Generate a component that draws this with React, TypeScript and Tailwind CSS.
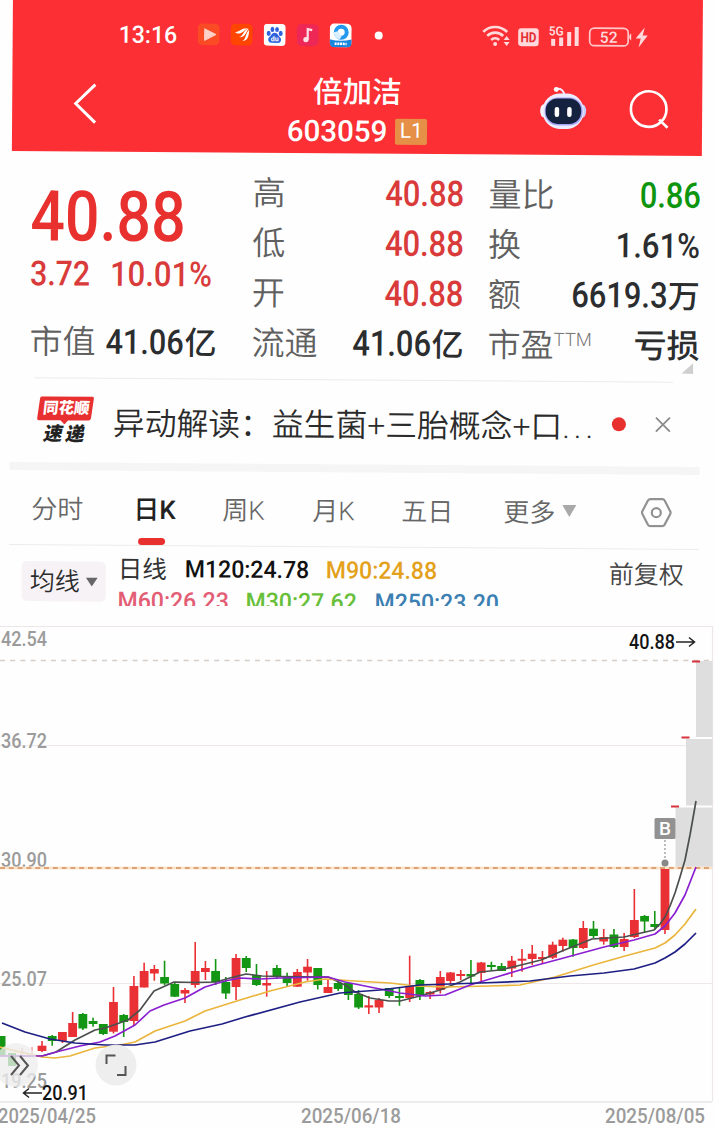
import React from 'react';
import clsx from 'clsx';

type Candle = [up: 0 | 1, high: number, top: number, bottom: number, low: number];

const FIRST_X = 42;
const STEP = 10.213;

const CANDLES: Candle[] = [
  [1, 1041, 1045.7, 1051, 1052],
  [0, 1035, 1036, 1041, 1045.7],
  [1, 1032, 1032, 1041, 1043],
  [1, 1012, 1023, 1037, 1037],
  [0, 1013, 1014, 1028.5, 1030],
  [0, 1017.7, 1021, 1024, 1026.7],
  [0, 1024, 1024, 1034, 1035],
  [1, 987, 1002, 1031.7, 1033.5],
  [0, 1014, 1015, 1022, 1037],
  [1, 976, 986, 1021, 1025],
  [1, 962.7, 971, 987.5, 987.5],
  [1, 965, 969, 973.5, 980.7],
  [0, 960.7, 977, 983.5, 985],
  [0, 983, 984, 996.7, 997],
  [1, 988, 990, 993.5, 1003],
  [1, 942, 971, 985, 987.7],
  [1, 961, 968, 972, 980],
  [0, 959, 971, 982, 985],
  [0, 977, 982, 993.5, 999],
  [1, 954, 958, 987, 1000],
  [0, 956, 958, 968, 972],
  [0, 964, 975, 985, 986],
  [1, 971, 983, 985.5, 996.7],
  [0, 965, 968, 977, 979],
  [0, 972.7, 977, 983, 987],
  [1, 969, 972, 986.7, 987],
  [1, 959, 966.7, 972.5, 980.7],
  [0, 968, 968, 985, 989.5],
  [1, 979, 987, 993, 993],
  [0, 980, 983, 989, 991],
  [0, 982, 983, 995, 1000],
  [0, 990, 994, 1007.5, 1009],
  [1, 996, 1005.3, 1007.5, 1014],
  [1, 998, 1000, 1007.5, 1013],
  [0, 988, 988, 996, 998],
  [0, 988, 996, 998, 1005.7],
  [1, 955.7, 986, 998, 1002],
  [0, 979, 980, 995.5, 1000],
  [1, 991, 992, 994.5, 999],
  [1, 971, 977, 990, 993.5],
  [1, 972, 972.5, 981, 984],
  [1, 970, 974, 976, 980],
  [0, 960, 974, 976.5, 985],
  [1, 962, 962.5, 973, 983],
  [0, 961.7, 965, 967, 970.7],
  [0, 963, 966, 971, 971],
  [1, 956, 960.7, 968.5, 977],
  [1, 949, 958.7, 960.7, 971.7],
  [1, 945, 953.7, 959, 965],
  [1, 951, 957, 959, 964],
  [1, 941.7, 944.7, 957.7, 959],
  [1, 937.7, 939.7, 946, 951.7],
  [0, 939, 939.5, 948, 956.7],
  [1, 921, 928, 948, 949],
  [0, 921, 928.7, 936, 938],
  [1, 929, 937, 941.5, 944.7],
  [0, 929, 934.5, 947, 948],
  [1, 933, 939, 947, 951],
  [1, 889, 920, 937, 938],
  [0, 915, 916, 921.5, 932.7],
  [0, 911, 924, 927, 930],
  [1, 869, 869, 930, 934],
];

const AVERAGES = [
  {
    color: '#4b4f4d',
    points:
      '0,1056 42,1056 56,1052 75,1040 95,1030 105,1028 128,1020 140,1010 154,991 174,982 195,982.5 216,982 230,978 246,974 262,976 280,976.5 328,977 345,985 355,992 370,998 389,1001 400,1001 420,996 440,990 460,982 480,972 500,970 521,965 541,960 562,951 592,939 624,937 654,930 660,924 665,917 670,906 675,893 680,877 685,860 690,835 696,801',
  },
  {
    color: '#e9b53c',
    points:
      '0,1047 20,1052 42,1057 55,1058 70,1056 95,1048 120,1045 135,1042 155,1031 185,1021 205,1011 240,1000 270,991 305,982 325,979 355,981 390,983 415,986 445,987 490,986 520,985 555,977 590,966 625,956 655,948 665,943 675,935 685,924 696,909',
  },
  {
    color: '#8a1fd0',
    points:
      '0,1056 42,1056 60,1051 80,1046 100,1042 115,1036 135,1025 150,1011 164,1005 185,998 205,987 225,981 240,978 260,979 280,978 328,977 345,982 375,988 400,993 425,996 445,995 470,985 500,976 530,967 560,959 604,947 634,940 655,934 665,926 675,913 685,895 696,867',
  },
  {
    color: '#1e1f83',
    points:
      '2,1023 25,1032 50,1039 75,1043 105,1045 135,1045 155,1042 190,1031 222,1024 245,1017 300,1002 340,993 380,990 420,985 480,983 530,981 570,976 604,973 634,969 655,963 665,958 675,952 685,944 696,933',
  },
];

const AXIS = [
  { text: '42.54', y: 646 },
  { text: '36.72', y: 748 },
  { text: '30.90', y: 867 },
  { text: '25.07', y: 986 },
  { text: '19.25', y: 1088 },
];

const TABS = [
  { label: '周K', width: 'w-[90px]' },
  { label: '月K', width: 'w-[89px]' },
  { label: '五日', width: 'w-[102px]' },
];

const Num: React.FC<{ className?: string; children: React.ReactNode }> = ({ className, children }) => (
  <span className={clsx('inline-block whitespace-nowrap font-medium', className)}>{children}</span>
);

const AppIcons = () => (
  <div className="ml-[18px] flex items-center gap-[11px]">
    <svg width="22" height="22" viewBox="0 0 22 22">
      <rect width="22" height="22" rx="5" fill="#fb4b25" />
      <path d="M7 5.500v11.500L18 11z" fill="#ffd2c8" stroke="#ffd2c8" strokeLinejoin="round" />
    </svg>
    <svg width="22" height="22" viewBox="0 0 22 22">
      <rect width="22" height="22" rx="5" fill="#ff4500" />
      <path d="M4 8.500C8 9 10 4 17.500 4.500 13 6 10 13 4 8.500zM8 13.500c5-.5 4-7.500 10-8.500-3 3-3 9.500-10 8.500zM11.500 17.500c4-1.500 3-8 7-11.500-.5 4 0 11-7 11.500z" fill="#fff" />
    </svg>
    <svg width="22" height="22" viewBox="0 0 22 22">
      <rect width="22" height="22" rx="4" fill="#fff" />
      <g fill="#2f62dc">
        <ellipse cx="5" cy="9.500" rx="2" ry="2.600" />
        <ellipse cx="8.700" cy="5.600" rx="1.900" ry="2.600" />
        <ellipse cx="13.300" cy="5.600" rx="1.900" ry="2.600" />
        <ellipse cx="17" cy="9.500" rx="2" ry="2.600" />
        <path d="M11 9c3 0 3.500 3 5.500 4.500 2 2 .5 5.500-2 5.500h-7c-2.500 0-4-3.500-2-5.500C7.500 12 8 9 11 9z" />
      </g>
      <text x="11" y="17.300" fontSize="7" fontWeight="700" textAnchor="middle" fill="#fff">du</text>
    </svg>
    <svg width="22" height="22" viewBox="0 0 22 22">
      <rect width="22" height="22" rx="5" fill="#ee2856" />
      <path d="M11 15.500V5l4.500 1" fill="none" stroke="#ffe0e6" strokeWidth="2.200" />
      <circle cx="9.300" cy="15.500" r="2.700" fill="#ffe0e6" />
    </svg>
    <svg width="22" height="24" viewBox="0 0 22 24">
      <rect width="22" height="24" rx="5" fill="#fff" />
      <circle cx="11.500" cy="9" r="5.500" fill="none" stroke="#2299ee" strokeWidth="4" />
      <path d="M4 9a7 7 0 0 0 6 7l2-3-4-5z" fill="#d9efff" />
      <path d="M0 16q11 3 22 0v3q0 5-5 5H5q-5 0-5-5z" fill="#1687dd" />
      <path d="M5 20.500h12" stroke="#fff" strokeWidth="2.500" strokeDasharray="2 .7" />
    </svg>
  </div>
);

const StatusIcons = () => (
  <svg className="-mt-0.5 ml-[99px]" width="170" height="24" viewBox="0 0 170 24">
    <g fill="none" stroke="#ffd9db" strokeWidth="2.700">
      <path d="M1.500 8.500a17 17 0 0 1 24 0" />
      <path d="M5.500 12.500a11.500 11.500 0 0 1 16 0" />
      <path d="M9.500 16.500a6 6 0 0 1 8 0" />
    </g>
    <g fill="#ffd9db">
      <circle cx="13.500" cy="20.500" r="2" />
      <path d="M22 16.500l3-4 3 4zM22 18.500l3 4 3-4z" />
      <rect x="36.500" y="4.500" width="20.500" height="18" rx="3" />
      <text x="46.800" y="18.500" fontSize="14" fontWeight="700" textAnchor="middle" fill="#e22f35" textLength="16" lengthAdjust="spacingAndGlyphs">HD</text>
      <text x="67" y="11.500" fontSize="12.500" fontWeight="600" textLength="15" lengthAdjust="spacingAndGlyphs">5G</text>
      <rect x="69.500" y="15" width="4" height="7" />
      <rect x="77.500" y="13.500" width="4" height="8.500" />
      <rect x="85.500" y="8" width="4" height="14" />
      <rect x="93" y="3" width="4" height="19" />
      <text x="127" y="18.500" fontSize="15.500" fontWeight="500" textAnchor="middle">52</text>
      <path d="M149.500 9v7q-2-1-2-3.500t2-3.500zM163 3l-9 11h5l-2 9 9-12h-5z" />
    </g>
    <rect x="108" y="4" width="38.500" height="17.500" rx="4.500" fill="none" stroke="#ffc7ca" strokeWidth="1.700" />
  </svg>
);

const Robot = () => (
  <svg width="48" height="44" viewBox="0 0 48 44">
    <path d="M17 3q7-1 8 6" fill="none" stroke="#f4eaff" strokeWidth="2" />
    <circle cx="17" cy="3.500" r="2.500" fill="#fff" />
    <ellipse cx="4.500" cy="25" rx="3.500" ry="6.500" fill="#f6f5ff" />
    <ellipse cx="43.500" cy="25" rx="3.500" ry="6.500" fill="#c9cdfb" />
    <rect x="3.500" y="7.500" width="41" height="35.500" rx="17" fill="#eeecff" />
    <rect x="5.500" y="11.500" width="38" height="28" rx="13" fill="#a7a5f6" />
    <rect x="6.500" y="12.500" width="35.500" height="25.500" rx="12" fill="#15223f" />
    <rect x="15.500" y="21" width="4.500" height="10" rx="2.200" fill="#fff" />
    <rect x="28" y="21" width="4.500" height="10" rx="2.200" fill="#fff" />
  </svg>
);

const Header = () => (
  <header className="h-[159px] bg-[#fb2f34] pt-4 text-white">
    <div className="flex h-[50px] items-center">
      <Num className="ml-[106px] w-[61px] origin-left scale-x-[0.96] pt-px text-[24px]">13:16</Num>
      <AppIcons />
      <span className="ml-[23px] size-2 rounded-full bg-white" />
      <StatusIcons />
    </div>
    <div className="flex h-[93px] justify-between">
      <div className="w-[240px] pl-[61px] pt-6">
        <svg width="24" height="42" viewBox="0 0 24 42" fill="none" stroke="#fff" strokeWidth="3">
          <path d="M22 2L2.500 21 22 40" />
        </svg>
      </div>
      <div className="flex flex-col items-center pt-3">
        <h1 className="h-10 text-[29.500px] leading-10 font-medium">倍加洁</h1>
        <div className="flex h-[38px] items-center gap-2">
          <Num className="text-[29.500px] leading-[38px]">603059</Num>
          <span className="flex h-[26px] w-8 items-center justify-center rounded-[2px] bg-[#e68f47] text-[21px]">L1</span>
        </div>
      </div>
      <div className="flex w-[240px] justify-end gap-[42px] pr-[33px] pt-6">
        <Robot />
        <svg className="mt-0.5" width="40" height="42" viewBox="0 0 40 42" fill="none" stroke="#fff" strokeWidth="2.700">
          <circle cx="19.500" cy="20.500" r="17.800" />
          <path d="M30 31l8.500 8" />
        </svg>
      </div>
    </div>
  </header>
);

const Label = ({ children }: { children: React.ReactNode }) => (
  <span className="pt-px text-[33px] font-[350] text-[#606060]">{children}</span>
);

const SHRINK = 'origin-right scale-x-[0.87] text-[35.500px]';

const Quote = () => (
  <section className="relative grid h-[226px] grid-cols-[222px_212px_211px] grid-rows-[50px_50px_50px_50px] pt-[15px] pl-[19px] leading-[50px] text-[#2b2d2f]">
    <div className="row-span-3 text-[#e8312f]">
      <div className="h-[92px] pt-[4px]">
        <Num className="origin-left scale-x-[0.87] text-[70px] leading-[92px]">40.88</Num>
      </div>
      <div className="flex h-[30px] items-center text-[#d93a3a]">
        <Num className="w-[80px] origin-left scale-x-[0.88] text-[34.500px]">3.72</Num>
        <Num className="origin-left scale-x-[0.9] text-[34.500px]">10.01%</Num>
      </div>
    </div>
    <div className="flex justify-between">
      <Label>高</Label>
      <Num className={clsx(SHRINK, 'text-[#d93a3a]')}>40.88</Num>
    </div>
    <div className="ml-6 flex w-[212px] justify-between">
      <Label>量比</Label>
      <Num className={clsx(SHRINK, 'text-[#0e950e]')}>0.86</Num>
    </div>
    <div className="flex justify-between">
      <Label>低</Label>
      <Num className={clsx(SHRINK, 'text-[#d93a3a]')}>40.88</Num>
    </div>
    <div className="ml-6 flex w-[212px] justify-between">
      <Label>换</Label>
      <Num className="origin-right scale-x-[0.9] text-[34.500px]">1.61%</Num>
    </div>
    <div className="flex justify-between">
      <Label>开</Label>
      <Num className={clsx(SHRINK, 'text-[#d93a3a]')}>40.88</Num>
    </div>
    <div className="ml-6 flex w-[212px] justify-between">
      <Label>额</Label>
      <span className="flex">
        <Num className={SHRINK}>6619.3</Num>
        <span className="pt-px text-[32px] font-medium">万</span>
      </span>
    </div>
    <div className="flex">
      <Label>市值</Label>
      <Num className="ml-2.5 w-[79px] origin-left scale-x-[0.89] text-[34.500px]">41.06</Num>
      <span className="pt-px text-[32px] font-medium">亿</span>
    </div>
    <div className="flex justify-between">
      <Label>流通</Label>
      <span className="flex">
        <Num className={SHRINK}>41.06</Num>
        <span className="pt-px text-[32px] font-medium">亿</span>
      </span>
    </div>
    <div className="ml-6 flex w-[212px]">
      <Label>市盈</Label>
      <span className="-mt-[5px] text-[18.500px] font-light text-[#777]">TTM</span>
      <span className="ml-auto pt-px text-[33px] font-medium">亏损</span>
    </div>
    <svg className="absolute right-[7px] bottom-[8px]" width="12" height="11">
      <path d="M12 0v11H0z" fill="#cfcfcf" />
    </svg>
  </section>
);

const Ticker = () => (
  <section className="flex h-[84px] items-center">
    <div className="relative ml-[27px] h-12 w-[57px]">
      <svg width="57" height="28" viewBox="0 0 57 28">
        <path d="M5 0h50q2 0 1.800 2L54 22q-.5 2-2.500 2H31l-3.500 4-4-4H2q-2 0-1.800-2L3 2q.3-2 2-2z" fill="#e7302f" />
      </svg>
      <span className="absolute top-px left-[6px] -skew-x-6 text-[15.500px] leading-[23px] font-black text-white">同花顺</span>
      <span className="absolute top-[27px] left-[7px] -skew-x-12 text-[19px] leading-[22px] font-black whitespace-nowrap text-[#222]">
        速<span className="ml-[3px]">递</span>
      </span>
    </div>
    <p className="ml-[19px] w-[490px] pt-[7px] text-[31.800px] leading-none font-[350] whitespace-nowrap text-[#2b2b2b]">
      异动解读：益生菌<span className="font-light">+</span>三胎概念<span className="font-light">+</span>口<span className="tracking-[4px]">...</span>
    </p>
    <span className="ml-[9px] size-3.5 rounded-full bg-[#e8302f]" />
    <svg className="ml-[29px]" width="16" height="16" viewBox="0 0 16 16" stroke="#8b8b8b" strokeWidth="1.800">
      <path d="M1 1l14 14M15 1L1 15" />
    </svg>
  </section>
);

const Tabs = () => (
  <nav className="flex h-[75px] items-center border-b border-[#ececec] pl-[22px] text-[26px] font-[350] text-[#666]">
    <span className="w-[102px] pt-1">分时</span>
    <span className="relative w-[89px] pt-1 font-medium text-[#222]">
      日K
      <i className="absolute -bottom-[15px] left-[5px] h-[7px] w-[27px] rounded-full bg-[#e8302f]" />
    </span>
    {TABS.map((tab) => (
      <span key={tab.label} className={clsx('pt-1', tab.width)}>{tab.label}</span>
    ))}
    <span className="flex items-center gap-[7px]">
      <span className="pt-1">更多</span>
      <svg width="14" height="12"><path d="M0 0h14L7 12z" fill="#a9a9a9" /></svg>
    </span>
    <svg className="mt-0.5 ml-[64px]" width="32" height="30" viewBox="0 0 32 30" fill="none" stroke="#929292" strokeWidth="2.200">
      <path d="M10 1.500h12q1.500 0 2.300 1.300l5.700 11q.6 1.200 0 2.400l-5.700 11q-.8 1.300-2.300 1.300H10q-1.500 0-2.300-1.300l-5.700-11q-.6-1.200 0-2.400l5.700-11Q8.500 1.500 10 1.500z" />
      <circle cx="16" cy="15" r="4.500" />
    </svg>
  </nav>
);

const MovingAverages = () => (
  <section className="flex items-start pl-[13px]">
    <div className="mt-4 flex h-10 w-[84px] items-center rounded-[5px] bg-[#f6f2f6] pl-2 text-[25px] font-[350] text-[#2b2b2b]">
      <span className="pt-0.5">均线</span>
      <svg className="ml-[6px]" width="12" height="9"><path d="M0 0h12L6 9z" fill="#666" /></svg>
    </div>
    <div className="ml-3 w-[480px]">
      <div className="mt-[6px] flex h-[34px] items-center">
        <span className="w-[67px] pt-0.5 text-[24.500px] text-[#333]">日线</span>
        <Num className="w-[141px] origin-left scale-x-[0.96] text-[24px] text-[#111]">M120:24.78</Num>
        <Num className="origin-left scale-x-[0.96] text-[24px] text-[#e3a11c]">M90:24.88</Num>
      </div>
      <div className="-mt-0.5 flex h-[34px] items-center">
        <Num className="w-[128px] origin-left scale-x-[0.96] text-[24px] text-[#e35d75]">M60:26.23</Num>
        <Num className="w-[129px] origin-left scale-x-[0.96] text-[24px] text-[#68bf3a]">M30:27.62</Num>
        <Num className="origin-left scale-x-[0.96] text-[24px] text-[#3b7fb3]">M250:23.20</Num>
      </div>
    </div>
    <span className="mt-[9px] ml-[11px] text-[25px] leading-[34px] font-[350] whitespace-nowrap text-[#444]">前复权</span>
  </section>
);

const Chart = () => (
  <svg className="block font-medium" width="715" height="523" viewBox="0 606 715 523">
    <g stroke="#eee7ea" strokeWidth="1.200" fill="none">
      <path d="M0 626.500H712.500V1101.500M0 745.500H712M0 983.500H712" />
      <path d="M0 1102H712" stroke="#e6e3e5" strokeWidth="1.500" />
    </g>
    <path d="M0 660.500H712" stroke="#d6cdc6" strokeWidth="1.300" strokeDasharray="5 5.200" />

    {/* price gaps */}
    <g fill="#dedede">
      <rect x="696" y="661" width="16.500" height="76" />
      <rect x="686" y="739" width="26.500" height="66.500" />
      <rect x="675.500" y="807.500" width="37" height="60" />
    </g>

    <g fill="#9b9b9b" fontSize="20">
      {AXIS.map((a) => (
        <text key={a.text} x="1" y={a.y} textLength="46" lengthAdjust="spacingAndGlyphs">{a.text}</text>
      ))}
      <text x="-2" y="1123" textLength="98" lengthAdjust="spacingAndGlyphs">2025/04/25</text>
      <text x="301" y="1123" textLength="100" lengthAdjust="spacingAndGlyphs">2025/06/18</text>
      <text x="605" y="1123" textLength="100" lengthAdjust="spacingAndGlyphs">2025/08/05</text>
    </g>

    <path d="M0 868H712" stroke="#fbe6cc" strokeWidth="3" />
    <path d="M0 868H712" stroke="#d58f5c" strokeWidth="1.500" strokeDasharray="5 3.800" />

    <g fill="#139613">
      <rect x="0" y="1036" width="5.500" height="20" />
      <rect x="8" y="1053" width="8" height="13" />
    </g>
    <path d="M22 1048v10M32 1047v9" stroke="#eda0a5" strokeWidth="1.500" />
    {CANDLES.map(([up, high, top, bottom, low], i) => {
      const x = FIRST_X + i * STEP;
      return (
        <g key={i} fill={up ? '#e93035' : '#139613'}>
          <rect x={x - 0.8} y={high} width="1.600" height={low - high} />
          <rect x={x - 4.4} y={top} width="8.800" height={bottom - top} />
        </g>
      );
    })}
    <path d="M671 806.500h8M681.500 737.500h8M692 661.500h8" stroke="#d7333d" strokeWidth="2" />

    {AVERAGES.map((line) => (
      <polyline key={line.color} points={line.points} fill="none" stroke={line.color} strokeWidth="1.700" strokeLinejoin="round" />
    ))}

    <rect x="654.500" y="818" width="21" height="21" rx="1.500" fill="#929292" />
    <text x="665" y="835" fontSize="19" textAnchor="middle" fill="#fff">B</text>
    <path d="M665 840v20" stroke="#999" strokeWidth="1.300" strokeDasharray="2 2" />
    <circle cx="665" cy="863" r="3.500" fill="#888" />

    <g fill="#141414" fontSize="20" stroke="none">
      <text x="629" y="649" textLength="46" lengthAdjust="spacingAndGlyphs">40.88</text>
      <text x="42" y="1100" textLength="46" lengthAdjust="spacingAndGlyphs">20.91</text>
    </g>
    <path d="M676 642h18M689 637.500l5.500 4.500-5.500 4.500M42 1093H24M29 1088.500l-5.500 4.500 5.500 4.500" fill="none" stroke="#222" strokeWidth="1.500" />

    <circle cx="16" cy="1065" r="22" fill="#ededed" fillOpacity=".78" />
    <path d="M11 1056l8 9.500-8 9.500M20 1056l8 9.500-8 9.500" fill="none" stroke="#555" strokeWidth="2" />
    <circle cx="116" cy="1065" r="20.500" fill="#ededed" fillOpacity=".95" />
    <path d="M106.500 1064v-8.500h9M117 1075h8.500v-9" fill="none" stroke="#555" strokeWidth="2" />
  </svg>
);

export default function App() {
  return (
    <div className="h-[1129px] w-[715px] overflow-hidden bg-[#fefefe] font-[Roboto,'Noto_Sans_CJK_SC',sans-serif]">
      <div className="h-[606px] overflow-hidden">
        <div className="-mt-2 ml-[13px] w-[690px] origin-top-left rotate-[0.41deg]">
          <Header />
          <Quote />
          <div className="mr-[27px] ml-6 h-px bg-[#ebebeb]" />
          <Ticker />
          <div className="h-[8px] bg-[#f5f5f5]" />
          <Tabs />
          <MovingAverages />
        </div>
      </div>
      <Chart />
    </div>
  );
}
